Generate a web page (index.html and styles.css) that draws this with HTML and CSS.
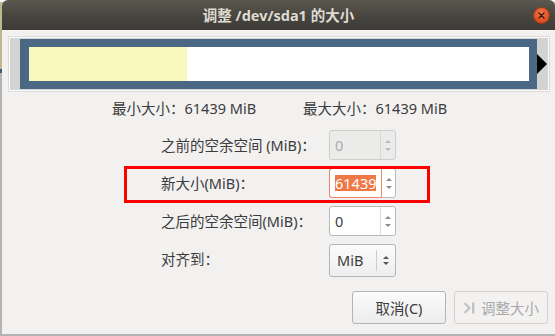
FILE: index.html
```html
<!DOCTYPE html>
<html>
<head>
<meta charset="utf-8">
<link rel="stylesheet" href="styles.css">
</head>
<body>
<div class="window">
  <div class="titlebar">
    <div></div>
    <div class="title">调整 /dev/sda1 的大小</div>
    <div class="tb-right">
      <svg class="close" width="17" height="17" viewBox="0 0 17 17">
        <defs>
          <radialGradient id="cg" cx="50%" cy="35%" r="60%">
            <stop offset="0" stop-color="#f47a4e"/>
            <stop offset="1" stop-color="#d9481c"/>
          </radialGradient>
        </defs>
        <circle cx="8.5" cy="8.5" r="8" fill="url(#cg)" stroke="#9f3514" stroke-width="0.8"/>
        <path d="M6 6 L11 11 M11 6 L6 11" stroke="#3a1508" stroke-width="1.3" stroke-linecap="round"/>
      </svg>
    </div>
  </div>
  <div class="content">
    <div class="part">
      <div class="part-side"></div>
      <div class="part-blue">
        <div class="used"></div>
        <div class="free"></div>
      </div>
      <div class="part-side right">
        <svg width="11" height="20" viewBox="0 0 11 20"><path d="M0 0 L10 10 L0 20 Z" fill="#000"/></svg>
      </div>
    </div>

    <div class="sizes">
      <span class="size-min">最小大小：61439 MiB</span>
      <span class="size-max">最大大小：61439 MiB</span>
    </div>

    <div class="form">
      <div class="label">之前的空余空间 (MiB)：</div>
      <div class="spin disabled">
        <div class="entry">0</div>
        <div class="arrows"><span class="up"></span><span class="down"></span></div>
      </div>

      <div class="label">新大小(MiB)：</div>
      <div class="spin focus">
        <div class="entry"><span class="sel">61439</span></div>
        <div class="arrows"><span class="up"></span><span class="down"></span></div>
      </div>

      <div class="label">之后的空余空间(MiB)：</div>
      <div class="spin">
        <div class="entry">0</div>
        <div class="arrows"><span class="up"></span><span class="down"></span></div>
      </div>

      <div class="label">对齐到：</div>
      <div class="combo">
        <div class="combo-text">MiB</div>
        <div class="combo-arrows"><span class="up"></span><span class="down"></span></div>
      </div>

      <div class="highlight"></div>
    </div>

    <div class="buttons">
      <div class="btn">取消(C)</div>
      <div class="btn disabled">
        <svg width="14" height="12" viewBox="0 0 14 12"><path d="M1.5 1 L6.5 6 L1.5 11" fill="none" stroke="#c2c2c2" stroke-width="2.2"/><rect x="9" y="0.5" width="2.4" height="11" fill="#c2c2c2"/></svg>
        <span>调整大小</span>
      </div>
    </div>
  </div>
</div>
</body>
</html>
```

FILE: styles.css
```css
* { box-sizing: border-box; }
html, body { margin: 0; padding: 0; }
body {
  width: 555px;
  height: 336px;
  overflow: hidden;
  background: linear-gradient(to bottom, #fafafa 0, #fafafa 2px, #bdb98f 2px, #bdb98f 69px, #3f5d80 69px, #3f5d80 73px, #b3b3b3 73px);
  font-family: "Noto Sans", "Noto Sans CJK SC", sans-serif;
  font-size: 14.5px;
  color: #3c3c3c;
}
.window {
  margin-left: 2px;
  width: 553px;
  height: 334px;
  background: #f2f1f0;
  border-radius: 6px 6px 0 0;
  overflow: hidden;
}
.titlebar {
  height: 30px;
  background: linear-gradient(to bottom, #5b5850 0%, #48463f 50%, #3c3b37 100%);
  display: grid;
  grid-template-columns: 1fr auto 1fr;
  align-items: center;
}
.title {
  color: #dfdbd2;
  font-weight: bold;
  font-size: 14.5px;
  line-height: 30px;
  padding-bottom: 1px;
}
.tb-right {
  display: flex;
  justify-content: flex-end;
  padding-right: 5px;
}
.close { display: block; margin-top: 0; }

.content {
  padding: 7px 6px 0 7px;
}
.part {
  width: 540px;
  height: 54px;
  border: 1px solid #fbfbfb;
  box-shadow: 0 0 0 1px #dadada;
  background: #d3d3d3;
  display: flex;
  padding-top: 1px;
}
.part-side { width: 10px; }
.part-side.right {
  width: 11px;
  display: flex;
  align-items: center;
  padding-bottom: 2px;
}
.part-side.right svg { display: block; }
.part-blue {
  width: 517px;
  height: 50px;
  background: #4a6883;
  padding: 8px;
  padding-left: 9px;
  display: flex;
}
.used { width: 158px; height: 34px; background: #f8f8bd; }
.free { width: 342px; height: 34px; background: #ffffff; }

.sizes {
  margin-top: 7px;
  padding-left: 103px;
  height: 20px;
  line-height: 20px;
  display: flex;
}
.size-min { width: 191px; }

.form {
  position: relative;
  margin-top: 12px;
  display: grid;
  grid-template-columns: 168px 67px;
  grid-auto-rows: 30px;
  row-gap: 8px;
  padding-left: 152px;
  align-items: center;
}
.form .label { line-height: 20px; }
.spin {
  height: 30px;
  display: flex;
  border: 1px solid #b9b9b9;
  border-radius: 3px;
  background: #ffffff;
}
.spin .entry {
  width: 51px;
  padding-left: 5px;
  line-height: 28px;
  border-right: 1px solid #dcdcdc;
}
.spin .arrows, .combo-arrows {
  flex: 1;
  display: flex;
  flex-direction: column;
  align-items: center;
  justify-content: center;
  gap: 5px;
}
.up, .down {
  width: 0; height: 0;
  border-left: 3px solid transparent;
  border-right: 3px solid transparent;
}
.up { border-bottom: 3px solid #8c8c8c; }
.down { border-top: 3px solid #8c8c8c; }
.spin.disabled { background: #ebebea; border-color: #cdcdcd; }
.spin.disabled .entry { color: #acacac; border-right-color: #d8d8d8; }
.spin.disabled .up { border-bottom-color: #b9b9b9; }
.spin.disabled .down { border-top-color: #b9b9b9; }
.spin.focus { border-color: #b9b9b9; }
.spin.focus .entry {
  margin: -1px 0 -1px -1px;
  border: 1px solid #ee8a62;
  border-radius: 3px 0 0 3px;
  width: 53px;
  padding-left: 5px;
  line-height: 28px;
  display: flex;
  align-items: center;
}
.sel {
  background: #f07746;
  color: #ffffff;
  line-height: 16px;
  padding: 0 0 0 0;
  display: inline-block;
}
.combo {
  height: 33px;
  align-self: start;
  display: flex;
  align-items: center;
  border: 1px solid #b5b5b5;
  border-radius: 3px;
  background: linear-gradient(to bottom, #fbfbfb, #eeeeee);
}
.combo-text {
  width: 47px;
  padding-left: 7px;
  height: 21px;
  line-height: 21px;
  border-right: 1px solid #cfcfcf;
}
.combo-arrows { gap: 3px; padding-right: 1px; }
.combo-arrows .up { border-bottom-color: #555; border-left-width: 3px; border-right-width: 3px; border-bottom-width: 3px; }
.combo-arrows .down { border-top-color: #555; }

.highlight {
  position: absolute;
  left: 115px;
  top: 36px;
  width: 306px;
  height: 37px;
  border: 3px solid #ff0000;
}

.buttons {
  margin-top: 17px;
  display: flex;
  justify-content: flex-end;
  gap: 8px;
  padding-right: 1px;
}
.btn {
  width: 94px;
  height: 33px;
  border: 1px solid #b4b4b4;
  border-radius: 3px;
  background: linear-gradient(to bottom, #fbfbfb, #ececec);
  display: flex;
  align-items: center;
  justify-content: center;
  gap: 4px;
  line-height: 20px;
}
.btn.disabled {
  border-color: #d2d2d2;
  background: #f3f2f1;
  color: #a9a9a9;
}
.btn svg { display: block; }
```
